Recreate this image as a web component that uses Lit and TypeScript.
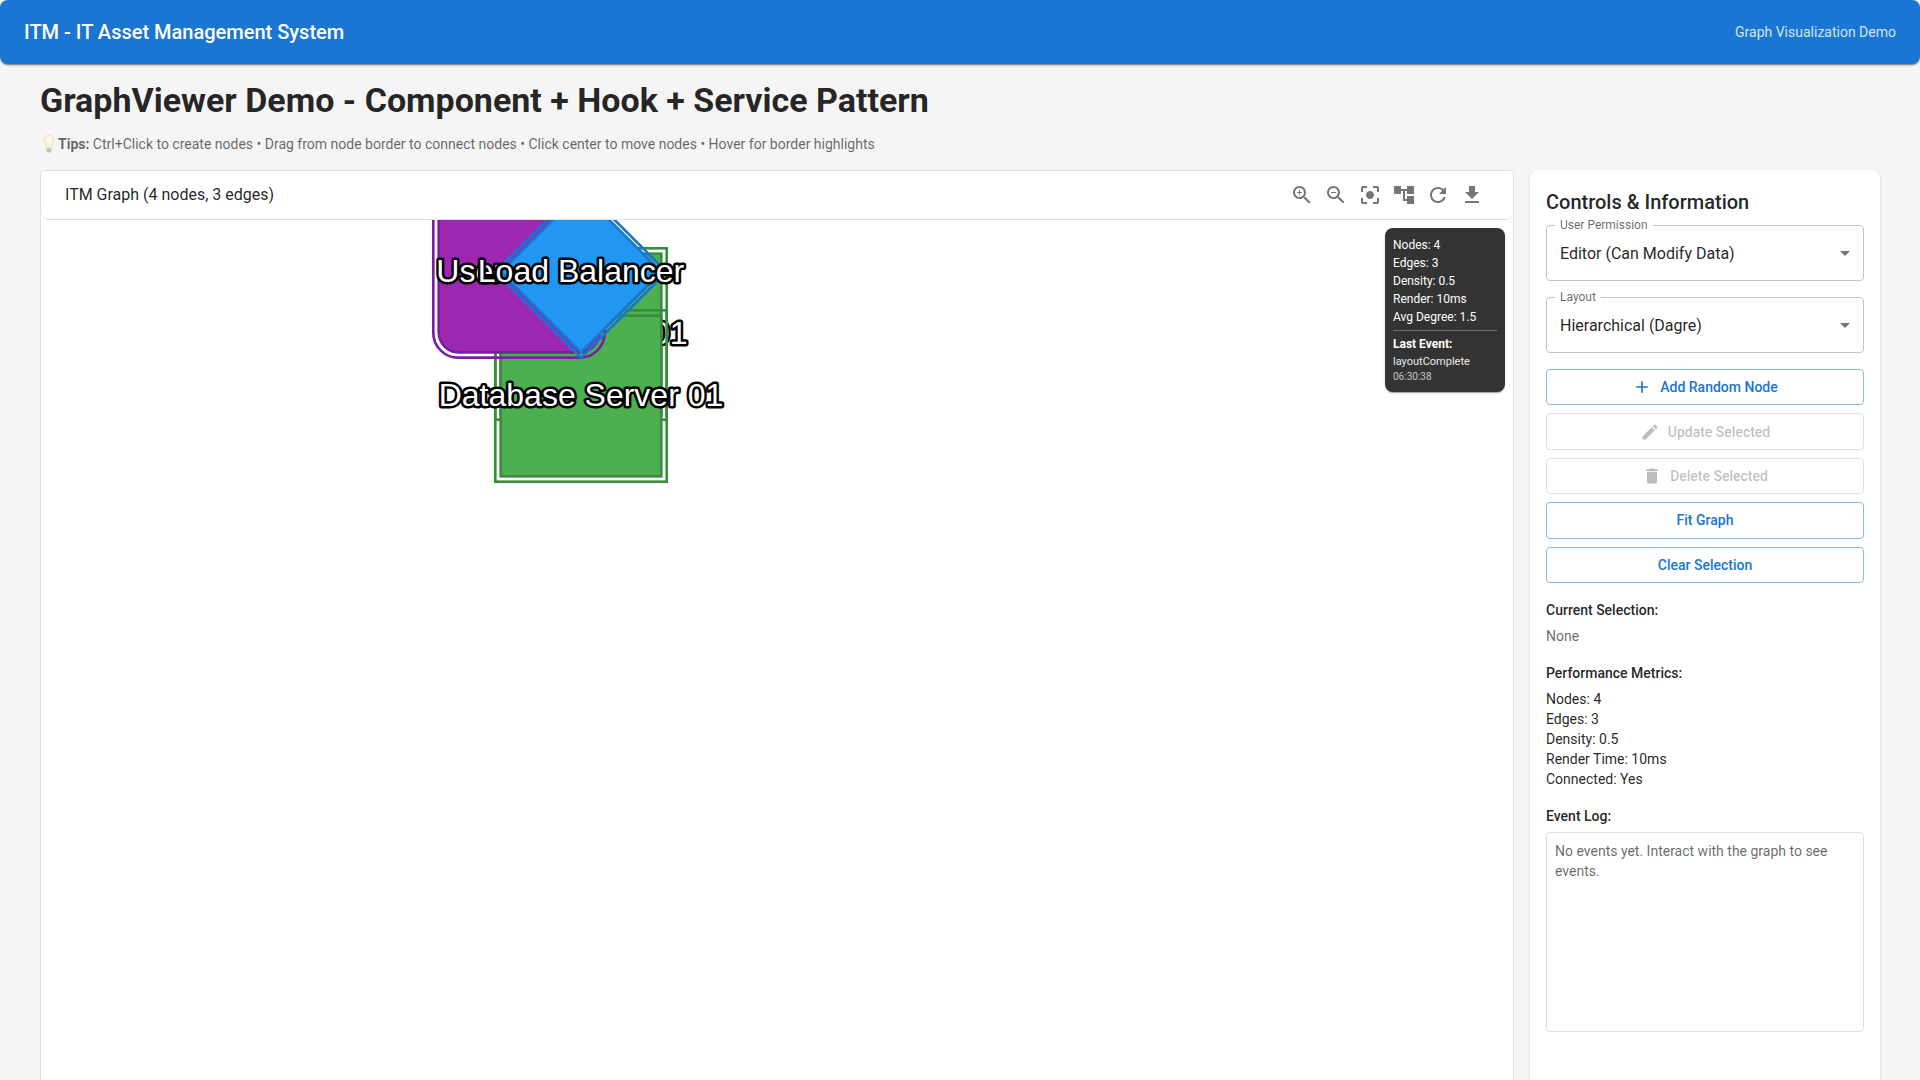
import { LitElement, html, svg, css } from "lit";
import { customElement, state } from "lit/decorators.js";

const ICONS = {
  zoomIn:
    "M15.5 14h-.79l-.28-.27C15.41 12.59 16 11.11 16 9.5 16 5.91 13.09 3 9.5 3S3 5.91 3 9.5 5.91 16 9.5 16c1.61 0 3.09-.59 4.23-1.57l.27.28v.79l5 4.99L20.49 19l-4.99-5zm-6 0C7.01 14 5 11.99 5 9.5S7.01 5 9.5 5 14 7.01 14 9.5 11.99 14 9.5 14zm.5-7H9v2H7v1h2v2h1v-2h2V9h-2z",
  zoomOut:
    "M15.5 14h-.79l-.28-.27C15.41 12.59 16 11.11 16 9.5 16 5.91 13.09 3 9.5 3S3 5.91 3 9.5 5.91 16 9.5 16c1.61 0 3.09-.59 4.23-1.57l.27.28v.79l5 4.99L20.49 19l-4.99-5zm-6 0C7.01 14 5 11.99 5 9.5S7.01 5 9.5 5 14 7.01 14 9.5 11.99 14 9.5 14zM7 9h5v1H7z",
  center:
    "M12 8c-2.21 0-4 1.79-4 4s1.79 4 4 4 4-1.79 4-4-1.79-4-4-4zm-7 7H3v4c0 1.1.9 2 2 2h4v-2H5v-4zM5 5h4V3H5c-1.100 0-2 .9-2 2v4h2V5zm14-2h-4v2h4v4h2V5c0-1.100-.9-2-2-2zm0 16h-4v2h4c1.100 0 2-.9 2-2v-4h-2v4z",
  tree: "M22 11V3h-7v3H9V3H2v8h7V8h2v10h4v3h7v-8h-7v3h-2V8h2v3z",
  refresh:
    "M17.65 6.35C16.2 4.9 14.21 4 12 4c-4.420 0-7.990 3.580-7.990 8s3.570 8 7.990 8c3.730 0 6.840-2.550 7.730-6h-2.080c-.82 2.330-3.040 4-5.650 4-3.310 0-6-2.690-6-6s2.690-6 6-6c1.660 0 3.140.69 4.220 1.780L13 11h7V4l-2.350 2.350z",
  download: "M19 9h-4V3H9v6H5l7 7 7-7zM5 18v2h14v-2H5z",
  add: "M19 13h-6v6h-2v-6H5v-2h6V5h2v6h6v2z",
  edit: "M3 17.25V21h3.750L17.810 9.940l-3.750-3.750L3 17.250zM20.710 7.040c.39-.39.39-1.020 0-1.410l-2.340-2.340c-.39-.39-1.020-.39-1.410 0l-1.830 1.830 3.750 3.750 1.830-1.830z",
  remove:
    "M6 19c0 1.100.9 2 2 2h8c1.100 0 2-.9 2-2V7H6v12zM19 4h-3.500l-1-1h-5l-1 1H5v2h14V4z",
  arrow: "M7 10l5 5 5-5z",
};

const icon = (name: keyof typeof ICONS) =>
  html`<svg class="icon" viewBox="0 0 24 24" aria-hidden="true"><path d=${ICONS[name]} /></svg>`;

const TOOLS: Array<[keyof typeof ICONS, string]> = [
  ["zoomIn", "Zoom in"],
  ["zoomOut", "Zoom out"],
  ["center", "Center graph"],
  ["tree", "Run layout"],
  ["refresh", "Refresh"],
  ["download", "Export"],
];

interface GraphNode {
  label: string;
  kind: "server" | "user" | "balancer";
  x: number;
  y: number;
}

const NODES: GraphNode[] = [
  { label: "Web Server 01", kind: "server", x: 540, y: 114 },
  { label: "Database Server 01", kind: "server", x: 540, y: 176 },
  { label: "User PC 01", kind: "user", x: 478, y: 52 },
  { label: "Load Balancer", kind: "balancer", x: 540, y: 52 },
];

const FONT = css`
  font-family: Roboto, "Liberation Sans", sans-serif;
`;

@customElement("graph-canvas")
export class GraphCanvas extends LitElement {
  static styles = css`
    :host {
      display: block;
      height: 100%;
    }
    .canvas {
      display: block;
      width: 100%;
      height: 100%;
    }
    .shape {
      stroke-width: 2.67px;
    }
    .ring {
      fill: none;
      stroke-width: 2.67px;
    }
    .server {
      stroke: #388e3c;
    }
    .server .shape {
      fill: #4caf50;
    }
    .user {
      stroke: #7b1fa2;
    }
    .user .shape {
      fill: #9c27b0;
    }
    .balancer {
      stroke: #1976d2;
    }
    .balancer .shape {
      fill: #2196f3;
    }
    .label {
      font-family: "Liberation Sans", Helvetica, Arial, sans-serif;
      font-size: 32px;
      text-anchor: middle;
      fill: #fff;
      stroke: #000;
      stroke-width: 5px;
      stroke-linejoin: round;
      paint-order: stroke;
    }
  `;

  private outline(node: GraphNode, half: number, radius: number, name: string) {
    const { x, y, kind } = node;
    if (kind === "balancer") {
      return svg`<path class=${name} d="M${x} ${y - half}L${x + half} ${y}L${x} ${y + half}L${x - half} ${y}Z" />`;
    }
    return svg`<rect class=${name} x=${x - half} y=${y - half} width=${half * 2} height=${half * 2}
      rx=${kind === "user" ? radius : 0} />`;
  }

  render() {
    return html`<svg class="canvas" role="img" aria-label="Asset graph">
      ${NODES.map(
        (n) => svg`<g class=${n.kind}>
          ${this.outline(n, 80.3, 20, "shape")}
          ${this.outline(n, 85.7, 25, "ring")}
          <text class="label" x=${n.x} y=${n.y + 10}>${n.label}</text>
        </g>`,
      )}
    </svg>`;
  }
}

@customElement("app-root")
export class AppRoot extends LitElement {
  static styles = css`
    :host {
      display: block;
      height: 100vh;
      overflow: hidden;
      background: #f5f5f5;
      color: rgba(0, 0, 0, 0.87);
      ${FONT}
      font-size: 14px;
      line-height: 20px;
    }
    * {
      box-sizing: border-box;
    }
    h1,
    h2,
    h3,
    p,
    ul {
      margin: 0;
      padding: 0;
      font-weight: 400;
    }
    ul {
      list-style: none;
    }
    .icon {
      display: block;
      width: 24px;
      height: 24px;
      fill: currentColor;
    }
    .bar {
      display: flex;
      align-items: center;
      justify-content: space-between;
      height: 64px;
      padding: 0 24px;
      border-radius: 8px;
      background: #1976d2;
      color: #fff;
      box-shadow: 0 2px 1px -1px rgba(0, 0, 0, 0.2), 0 1px 1px rgba(0, 0, 0, 0.14),
        0 1px 3px rgba(0, 0, 0, 0.3);
    }
    .brand {
      font-size: 20px;
      font-weight: 500;
      line-height: 32px;
    }
    .subtitle {
      opacity: 0.8;
    }
    .page {
      padding: 15px 40px 0;
    }
    .title {
      font-size: 34px;
      font-weight: 700;
      line-height: 42px;
    }
    .tips {
      display: flex;
      align-items: center;
      margin: 13px 0 16px;
      color: rgba(0, 0, 0, 0.6);
    }
    .bulb {
      flex: none;
      width: 18px;
      height: 20px;
      opacity: 0.6;
    }
    .tips-text b {
      font-weight: 700;
    }
    .workspace {
      display: grid;
      grid-template-columns: minmax(0, 1fr) 350px;
      gap: 16px;
      height: 100vh;
    }
    .viewer {
      display: flex;
      flex-direction: column;
      border: 1px solid #e0e0e0;
      border-radius: 4px;
      background: #fff;
    }
    .toolbar {
      display: flex;
      align-items: center;
      justify-content: space-between;
      height: 49px;
      padding: 0 24px;
      border-bottom: 1px solid #e0e0e0;
      border-radius: 0 0 8px 8px;
    }
    .graph-title {
      font-size: 16px;
      line-height: 24px;
    }
    .tools {
      display: flex;
    }
    .tool {
      padding: 5px;
      border: 0;
      border-radius: 50%;
      background: none;
      color: rgba(0, 0, 0, 0.54);
    }
    .stage {
      position: relative;
      flex: 1;
      min-height: 0;
    }
    .stats {
      position: absolute;
      top: 8px;
      right: 8px;
      min-width: 120px;
      padding: 8px;
      border-radius: 8px;
      background: #333;
      color: #fff;
      font-size: 12px;
      line-height: 18px;
      box-shadow: 0 2px 1px -1px rgba(0, 0, 0, 0.2), 0 1px 1px rgba(0, 0, 0, 0.14),
        0 1px 3px rgba(0, 0, 0, 0.12);
    }
    .last {
      margin-top: 4px;
      padding-top: 4px;
      border-top: 1px solid rgba(255, 255, 255, 0.3);
    }
    .last-title {
      font-weight: 700;
    }
    .last-name {
      font-size: 11px;
      line-height: 17px;
      opacity: 0.9;
    }
    .last-time {
      font-size: 10px;
      line-height: 14px;
      opacity: 0.7;
    }
    .panel {
      display: flex;
      flex-direction: column;
      gap: 16px;
      padding: 16px;
      border-radius: 8px;
      background: #fff;
      box-shadow: 0 2px 1px -1px rgba(0, 0, 0, 0.2), 0 1px 1px rgba(0, 0, 0, 0.14),
        0 1px 3px rgba(0, 0, 0, 0.12);
    }
    .panel-title {
      margin-bottom: -9px;
      font-size: 20px;
      font-weight: 500;
      line-height: 32px;
    }
    .field {
      position: relative;
    }
    .field-label {
      position: absolute;
      top: -8px;
      left: 9px;
      padding: 0 5px;
      background: #fff;
      color: rgba(0, 0, 0, 0.6);
      font-size: 12px;
      line-height: 16px;
    }
    .select {
      display: block;
      width: 100%;
      height: 56px;
      padding: 2px 32px 0 13px;
      border: 1px solid #c4c4c4;
      border-radius: 4px;
      background: #fff;
      color: inherit;
      font: inherit;
      font-size: 16px;
      appearance: none;
    }
    .field .icon {
      position: absolute;
      top: 16px;
      right: 7px;
      color: rgba(0, 0, 0, 0.54);
      pointer-events: none;
    }
    .actions {
      display: grid;
      grid-auto-rows: 1fr;
      gap: 8px;
      min-height: 214px;
    }
    .action {
      display: flex;
      align-items: center;
      justify-content: center;
      gap: 8px;
      padding: 0 16px;
      border: 1px solid rgba(25, 118, 210, 0.5);
      border-radius: 4px;
      background: none;
      color: #1976d2;
      font: inherit;
      font-weight: 500;
    }
    .action:disabled {
      border-color: rgba(0, 0, 0, 0.12);
      color: rgba(0, 0, 0, 0.26);
    }
    .action .icon {
      width: 20px;
      height: 20px;
    }
    .section {
      display: grid;
      gap: 5px;
    }
    .section-title {
      font-size: 14px;
      font-weight: 500;
      line-height: 22px;
    }
    .muted {
      color: rgba(0, 0, 0, 0.6);
    }
    .log {
      height: 200px;
      padding: 8px;
      overflow: auto;
      border: 1px solid #e0e0e0;
      border-radius: 4px;
    }
  `;

  @state() private permission = "editor";
  @state() private layout = "dagre";

  render() {
    return html`
      <header class="bar">
        <span class="brand">ITM - IT Asset Management System</span>
        <span class="subtitle">Graph Visualization Demo</span>
      </header>
      <main class="page">
        <h1 class="title">GraphViewer Demo - Component + Hook + Service Pattern</h1>
        <p class="tips">
          <svg class="bulb" viewBox="0 0 18 20" aria-hidden="true">
            <path d="M6.500 13.500h5v3.500q-.5 1.500-2.500 1.500t-2.500-1.500z" fill="#9a9ea2" />
            <path
              d="M9 1C6 1 4.500 3.300 4.500 6c0 3.200 2 4.500 2.300 8h4.400c.3-3.500 2.300-4.800 2.300-8C13.500 3.300 12 1 9 1z"
              fill="#fff3c4"
              stroke="#f5dc8c"
            />
            <ellipse cx="9" cy="6" rx="2.500" ry="3.200" fill="#fffdf2" />
          </svg>
          <span class="tips-text"
            ><b>Tips:</b> Ctrl+Click to create nodes • Drag from node border to connect nodes • Click
            center to move nodes • Hover for border highlights</span
          >
        </p>
        <div class="workspace">
          <section class="viewer">
            <div class="toolbar">
              <h2 class="graph-title">ITM Graph (4 nodes, 3 edges)</h2>
              <div class="tools">
                ${TOOLS.map(
                  ([name, label]) =>
                    html`<button class="tool" type="button" aria-label=${label}>${icon(name)}</button>`,
                )}
              </div>
            </div>
            <div class="stage">
              <graph-canvas></graph-canvas>
              <div class="stats">
                <ul>
                  <li>Nodes: 4</li>
                  <li>Edges: 3</li>
                  <li>Density: 0.5</li>
                  <li>Render: 10ms</li>
                  <li>Avg Degree: 1.5</li>
                </ul>
                <div class="last">
                  <p class="last-title">Last Event:</p>
                  <p class="last-name">layoutComplete</p>
                  <p class="last-time">06:30:38</p>
                </div>
              </div>
            </div>
          </section>
          <aside class="panel">
            <h2 class="panel-title">Controls &amp; Information</h2>
            <div class="field">
              <select
                class="select"
                id="permission"
                .value=${this.permission}
                @change=${(e: Event) => (this.permission = (e.target as HTMLSelectElement).value)}
              >
                <option value="editor">Editor (Can Modify Data)</option>
              </select>
              <label class="field-label" for="permission">User Permission</label>
              ${icon("arrow")}
            </div>
            <div class="field">
              <select
                class="select"
                id="layout"
                .value=${this.layout}
                @change=${(e: Event) => (this.layout = (e.target as HTMLSelectElement).value)}
              >
                <option value="dagre">Hierarchical (Dagre)</option>
              </select>
              <label class="field-label" for="layout">Layout</label>
              ${icon("arrow")}
            </div>
            <div class="actions">
              <button class="action" type="button">${icon("add")}Add Random Node</button>
              <button class="action" type="button" disabled>${icon("edit")}Update Selected</button>
              <button class="action" type="button" disabled>${icon("remove")}Delete Selected</button>
              <button class="action" type="button">Fit Graph</button>
              <button class="action" type="button">Clear Selection</button>
            </div>
            <section class="section">
              <h3 class="section-title">Current Selection:</h3>
              <p class="muted">None</p>
            </section>
            <section class="section">
              <h3 class="section-title">Performance Metrics:</h3>
              <ul>
                <li>Nodes: 4</li>
                <li>Edges: 3</li>
                <li>Density: 0.5</li>
                <li>Render Time: 10ms</li>
                <li>Connected: Yes</li>
              </ul>
            </section>
            <section class="section">
              <h3 class="section-title">Event Log:</h3>
              <div class="log muted">No events yet. Interact with the graph to see events.</div>
            </section>
          </aside>
        </div>
      </main>
    `;
  }
}
